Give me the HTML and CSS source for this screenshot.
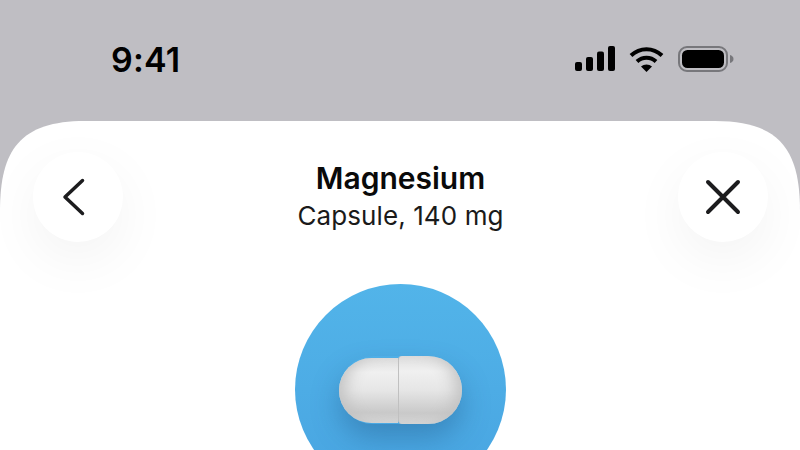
FILE: index.html
```html
<!DOCTYPE html>
<html lang="en">
<head>
<meta charset="utf-8">
<title>Magnesium</title>
<link rel="stylesheet" href="styles.css">
</head>
<body>
<div class="status">
  <span class="time">9:41</span>
  <div class="status-icons">
    <svg class="signal" width="40" height="26" viewBox="0 0 40 26"><g fill="#000"><rect x="0" y="16" width="7" height="9" rx="2"/><rect x="11" y="11" width="7" height="14" rx="2"/><rect x="22" y="5.500" width="7" height="19.500" rx="2"/><rect x="33" y="0" width="7" height="25" rx="2"/></g></svg>
    <svg class="wifi" width="35" height="26" viewBox="0 0 35 26"><g fill="none" stroke="#000" stroke-width="4"><path d="M2 9.500C11 1 24 1 33 9.500"/><path d="M8 15.500C13.500 10.500 21.500 10.500 27 15.500"/></g><path d="M12 20.500C15 17.800 20 17.800 23 20.500L17.500 26Z" fill="#000"/></svg>
    <svg class="battery" width="56" height="26" viewBox="0 0 56 26"><rect x="1" y="1" width="48" height="24" rx="8" fill="none" stroke="#77777b" stroke-width="2"/><rect x="4" y="4" width="42" height="18" rx="5.500" fill="#000"/><path d="M52 9c2 .6 3.500 2 3.500 4s-1.500 3.400-3.500 4Z" fill="#77777b"/></svg>
  </div>
</div>
<main class="sheet">
  <header class="top">
    <button class="round" aria-label="Back">
      <svg class="chevron" width="24" height="38" viewBox="0 0 24 38"><path d="M20.500 2.500 3 19l17.500 16.500" fill="none" stroke="#1c1c1e" stroke-width="3.500" stroke-linecap="round" stroke-linejoin="round"/></svg>
    </button>
    <div class="titles">
      <h1 class="title">Magnesium</h1>
      <p class="sub">Capsule, 140 mg</p>
    </div>
    <button class="round" aria-label="Close">
      <svg width="38" height="38" viewBox="0 0 38 38"><path d="M4 4l30 30M34 4 4 34" fill="none" stroke="#1c1c1e" stroke-width="4" stroke-linecap="round"/></svg>
    </button>
  </header>
  <div class="disc">
    <div class="pill">
      <div class="half left"></div>
      <div class="half right"></div>
    </div>
  </div>
</main>
</body>
</html>
```
FILE: styles.css
```css
* { box-sizing: border-box; }
html, body { margin: 0; height: 100%; }
body {
  width: 800px;
  height: 450px;
  overflow: hidden;
  background: #bfbec3;
  font-family: Inter, "Liberation Sans", sans-serif;
  color: #000;
  display: flex;
  flex-direction: column;
}
.status {
  height: 121px;
  flex: none;
  display: flex;
  justify-content: space-between;
  align-items: flex-start;
  padding: 39px 66px 0 111px;
}
.time {
  font-size: 34px;
  line-height: 42px;
  font-weight: 600;
  letter-spacing: 0.2px;
  color: #000;
}
.status-icons {
  display: flex;
  align-items: center;
  gap: 14px;
  padding-top: 7px;
}
.sheet {
  flex: 1;
  background: #fff;
  clip-path: path("M0 90C0 29 20 0 85 0H715C780 0 800 29 800 90V329H0Z");
  padding: 31px 32px 0 33px;
  display: flex;
  flex-direction: column;
  align-items: center;
  min-height: 0;
  overflow: hidden;
}
.top {
  width: 100%;
  display: flex;
  justify-content: space-between;
  align-items: flex-start;
}
.round {
  width: 90px;
  height: 90px;
  flex: none;
  border: 0;
  padding: 0;
  border-radius: 50%;
  background: #fff;
  box-shadow: 0 18px 56px rgba(0, 0, 0, 0.05);
  display: flex;
  align-items: center;
  justify-content: center;
}
.chevron { margin-right: 8px; }
.titles {
  text-align: center;
  padding-top: 7px;
}
.title {
  margin: 0;
  font-size: 30px;
  line-height: 38px;
  font-weight: 600;
  color: #0a0a0a;
}
.sub {
  margin: 2px 0 0;
  font-size: 26px;
  line-height: 34px;
  font-weight: 400;
  letter-spacing: 0.1px;
  color: #1a1a1a;
}
.disc {
  width: 211px;
  height: 211px;
  flex: none;
  margin-top: 42px;
  border-radius: 50%;
  background: linear-gradient(180deg, #52b4e9 0%, #48a4e1 100%);
  display: flex;
  align-items: flex-start;
  justify-content: center;
  padding-top: 72px;
}
.pill {
  display: flex;
  align-items: center;
  border-radius: 34px;
  box-shadow: 0 14px 28px rgba(28, 78, 125, 0.36);
}
.half {
  background: linear-gradient(180deg, #dedede 0%, #f0f0f0 22%, #e6e6e6 50%, #c9c9c9 84%, #d6d6d6 100%);
}
.left {
  width: 59px;
  height: 65px;
  border-radius: 33px 0 0 33px;
  box-shadow: inset 14px 0 16px -8px #c2c2c2;
}
.right {
  width: 64px;
  height: 68px;
  border-radius: 4px 34px 34px 4px;
  border-left: 1px solid #c0c0c0;
  box-shadow: inset -14px 0 16px -8px #c2c2c2;
}
```
